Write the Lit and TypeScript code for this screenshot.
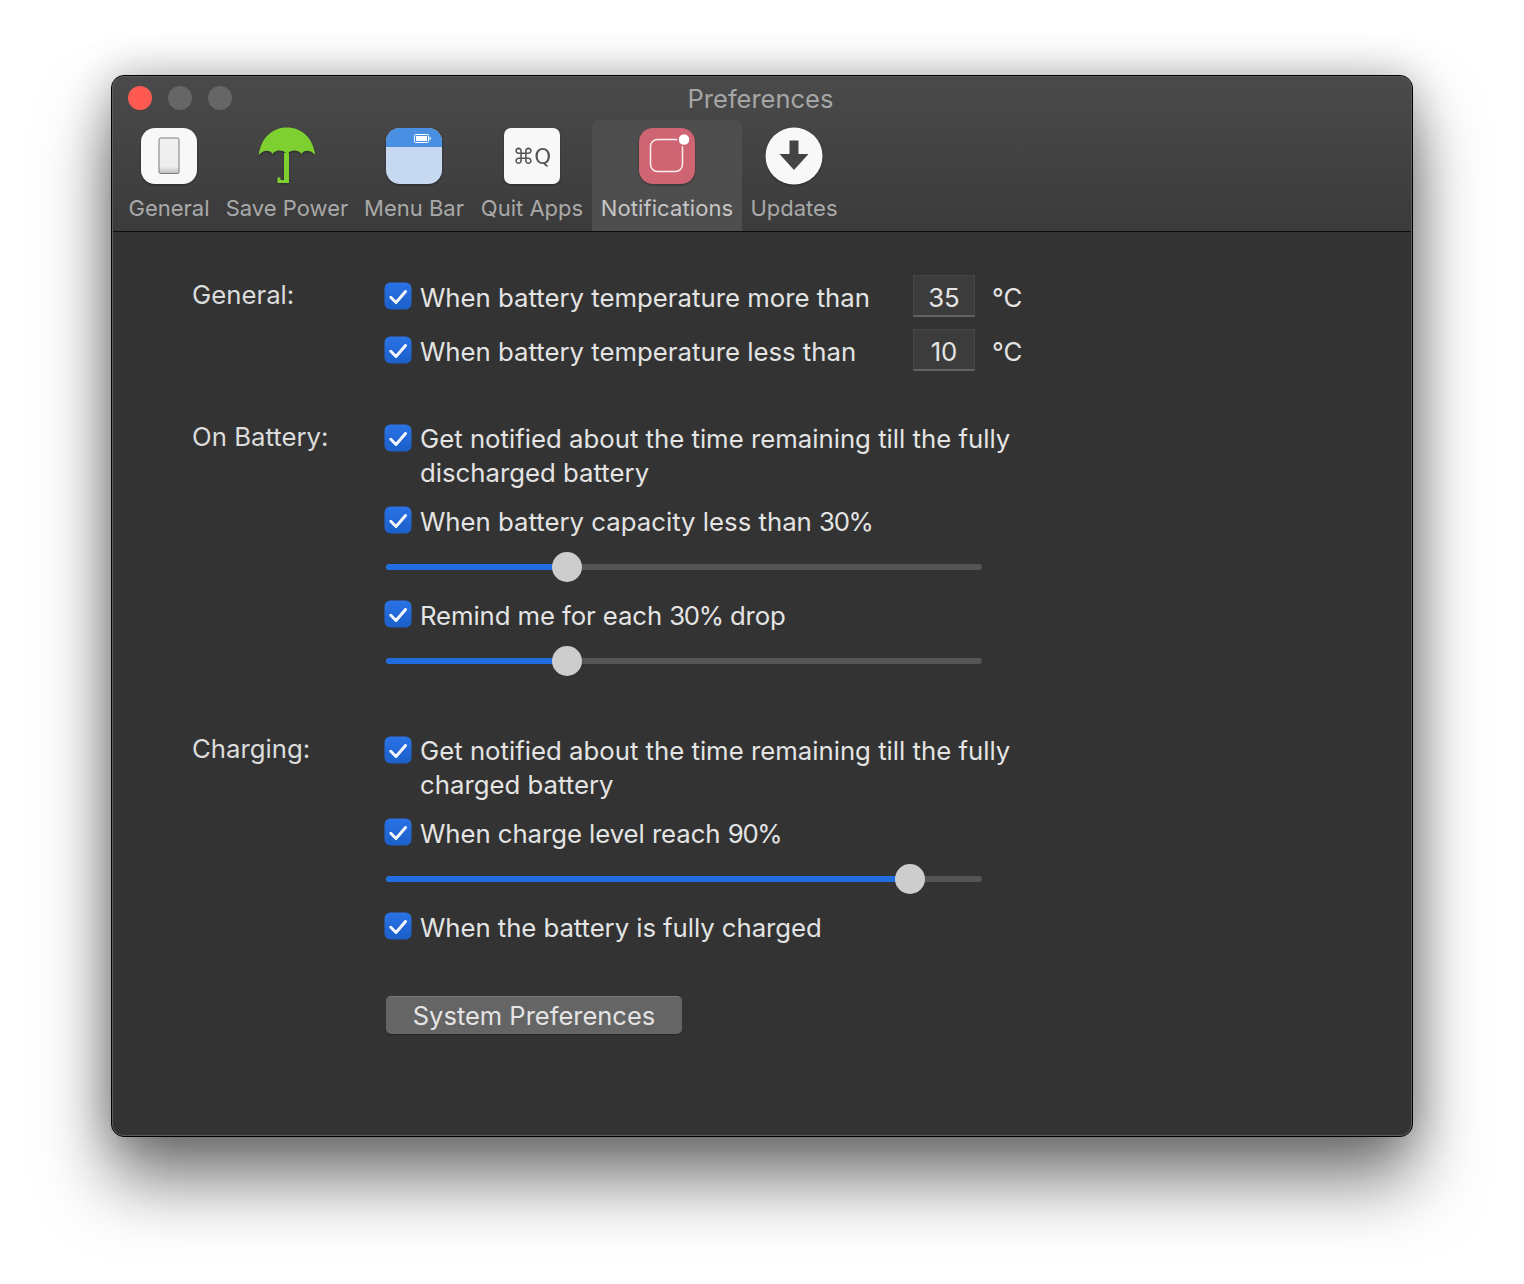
import { LitElement, html, css, svg } from "lit";
import { customElement } from "lit/decorators.js";

const icons: Record<string, unknown> = {
  general: html`<svg viewBox="0 0 58 58" width="58" height="58"><defs><linearGradient id="sw" x1="0" y1="0" x2="0" y2="1"><stop offset="0" stop-color="#f0f0f0"/><stop offset=".8" stop-color="#eeeeee"/><stop offset="1" stop-color="#bdbdbd"/></linearGradient></defs>
    <rect x="1" y="1" width="56" height="56" rx="14" fill="#f8f8f8"/><rect x="19" y="11" width="20" height="35.500" rx="1.500" fill="url(#sw)" stroke="#7d7d7d"/></svg>`,
  power: html`<svg viewBox="0 0 58 58" width="58" height="58"><path d="M.7 28C3 11 14 .5 29 .5S55 11 57.300 28C53 23 46 22 43.500 27C41 22.500 33 22 29 27C25 22 17 22.500 14.500 27C12 22 5 23 .7 28Z" fill="#7ed030"/><path d="M26 26H31V56H19.500V50.500H22.500V53H26Z" fill="#7ed030"/></svg>`,
  menu: html`<svg viewBox="0 0 58 58" width="58" height="58"><defs><clipPath id="mc"><rect x="1" y="1" width="56" height="56" rx="14"/></clipPath></defs><g clip-path="url(#mc)"><rect x="1" y="1" width="56" height="56" fill="#c7d9f1"/><rect x="1" y="1" width="56" height="19" fill="#4a90e2"/></g>
    <rect x="29.500" y="7.500" width="14" height="8" rx="1" fill="none" stroke="#fff" stroke-width="1"/><rect x="31" y="9" width="11" height="5" fill="#fff"/><rect x="44.500" y="10" width="1.200" height="3" fill="#fff"/></svg>`,
  quit: html`<svg viewBox="0 0 58 58" width="58" height="58"><rect x="1" y="1" width="56" height="56" rx="7" fill="#f8f8f8"/></svg><span class="qt">⌘Q</span>`,
  notif: html`<svg viewBox="0 0 58 58" width="58" height="58"><rect x="1" y="1" width="56" height="56" rx="14" fill="#cf6473"/><rect x="12.500" y="12.500" width="32" height="32" rx="7" fill="none" stroke="#fbeef0" stroke-width="1.500"/><circle cx="46" cy="12.500" r="7" fill="#cf6473"/><circle cx="46" cy="12.500" r="5.300" fill="#fff"/></svg>`,
  updates: html`<svg viewBox="0 0 58 58" width="58" height="58"><circle cx="29" cy="29" r="28.500" fill="#f8f8f8"/><path d="M24.500 13.500H33.500V27H43.500L29 43L14.500 27H24.500Z" fill="#444"/></svg>`,
};

const tabs = [
  ["General", "general"],
  ["Save Power", "power"],
  ["Menu Bar", "menu"],
  ["Quit Apps", "quit"],
  ["Notifications", "notif"],
  ["Updates", "updates"],
];

const check = svg`<svg viewBox="0 0 28 28" width="28" height="28"><defs><linearGradient id="cb" x1="0" y1="0" x2="0" y2="1"><stop offset="0" stop-color="#2a72e6"/><stop offset="1" stop-color="#1b5fc8"/></linearGradient></defs><rect x="0.500" y="0.500" width="27" height="27" rx="6" fill="url(#cb)"/><path d="M6.800 15.300L12 20.500L21.500 9.500" fill="none" stroke="#f2f6fd" stroke-width="3" stroke-linecap="round" stroke-linejoin="round"/></svg>`;

@customElement("app-root")
export class AppRoot extends LitElement {
  static styles = css`
    :host {
      display: block;
      box-sizing: border-box;
      width: 1524px;
      height: 1284px;
      padding: 75px 111px 0;
      background: #fff;
      font-family: Inter, "Noto Sans", sans-serif;
      color: #e4e4e4;
    }
    .win {
      box-sizing: border-box;
      width: 1302px;
      height: 1062px;
      border: 1px solid #000;
      border-radius: 13px;
      background: #333;
      box-shadow: 0 44px 70px rgba(0, 0, 0, 0.52), 0 0 44px rgba(0, 0, 0, 0.28);
      overflow: hidden;
      position: relative;
    }
    .win::after {
      content: "";
      position: absolute;
      inset: 0;
      border-radius: 12px;
      box-shadow: inset 0 0 0 1px #5c5c5c;
      pointer-events: none;
    }
    .bar {
      height: 156px;
      box-sizing: border-box;
      background: linear-gradient(#4a4a4a, #3b3b3b);
      border-bottom: 1px solid #0c0c0c;
      position: relative;
      padding: 44px 0 0 8px;
    }
    .lights {
      position: absolute;
      left: 16px;
      top: 10px;
      display: flex;
      gap: 16px;
    }
    .lights i { width: 24px; height: 24px; border-radius: 50%; background: #666; }
    .lights i:first-child { background: #ff5a52; }
    .title {
      position: absolute;
      left: 0;
      right: 0;
      top: 7px;
      text-align: center;
      padding-right: 3px;
      font-size: 25.5px;
      line-height: 32px;
      color: #a6a6a6;
    }
    .tabs {
      display: grid;
      grid-template-columns: 98px 138px 116px 120px 150px 104px;
      height: 111px;
    }
    .tab {
      padding-top: 7px;
      display: flex;
      flex-direction: column;
      align-items: center;
      border-radius: 8px 8px 0 0;
      font-size: 22px;
      color: #a9a9a9;
      white-space: nowrap;
    }
    .tab.on { background: #4e4e4e; color: #c6c6c6; letter-spacing: 0.1px; }
    .ico { position: relative; width: 58px; height: 58px; margin-bottom: 7px; filter: drop-shadow(0 1px 1px rgba(0,0,0,.35)); }
    .ico svg { display: block; }
    .qt {
      position: absolute;
      inset: 0;
      display: flex;
      align-items: center;
      justify-content: center;
      font-size: 21.500px;
      color: #555;
      font-family: "DejaVu Sans", sans-serif;
    }
    .lab { line-height: 32px; }
    .body { padding: 43px 0 0 80px; }
    .sec { display: grid; grid-template-columns: 193px 700px; }
    .sec + .sec { margin-top: 50px; }
    .sec.c { margin-top: 57px; }
    .name { font-size: 25.750px; line-height: 34px; margin-top: -1px; color: #dcdcdc; }
    .gen .name { margin-top: 3px; }
    .col { display: flex; flex-direction: column; }
    .row {
      display: flex;
      align-items: flex-start;
      font-size: 25.750px;
      line-height: 34px;
      margin-top: 15px;
    }
    .row:first-child { margin-top: 0; }
    .t { padding-top: 1px; margin-bottom: -1px; }
    .row.wrap .t { width: 640px; }
    .row.wrap svg { margin-top: 3px; }
    .row.tight .t { letter-spacing: -0.1px; }
    .row.tight2 .t { letter-spacing: -0.06px; }
    .num { letter-spacing: -1.300px; }
    .row svg { flex: none; margin: 2px 8px 0 -1px; display: block; }
    .gen .row { height: 42px; align-items: center; margin-top: 12px; }
    .gen .row:first-child { margin-top: 0; }
    .gen .row svg { margin-top: 0; }
    .gen .t, .gen .unit { padding-top: 4px; margin-bottom: 0; }
    .gen .t { width: 493px; }
    .input {
      box-sizing: border-box;
      width: 62px;
      height: 42px;
      background: #3c3c3c;
      border: 1px solid #454545;
      border-bottom: 2px solid #626262;
      text-align: center;
      line-height: 44px;
      margin-right: 17px;
    }
    .slider { position: relative; height: 30px; width: 596px; margin: 14px 0 0 1px; }
    .slider + .row { margin-top: 16px; }
    .track { position: absolute; left: 0; right: 0; top: 12px; height: 6px; border-radius: 3px; background: #555; }
    .fill { position: absolute; left: 0; top: 12px; height: 6px; border-radius: 3px; background: #1f6ee0; }
    .thumb { position: absolute; top: 0; width: 30px; height: 30px; margin-left: -15px; border-radius: 50%; background: #cdcdcd; }
    .btn {
      box-sizing: border-box;
      width: 296px;
      height: 38px;
      margin: 52px 0 0 1px;
      background: #656565;
      border-radius: 5px;
      border-top: 1px solid #7a7a7a;
      text-align: center;
      font-size: 25.500px;
      line-height: 37px;
      box-shadow: 0 1px 1px rgba(0,0,0,.3);
    }
  `;

  private row(text: unknown, cls = "") {
    return html`<div class="row ${cls}">${check}<span class="t">${text}</span></div>`;
  }
  private slider(x: number) {
    return html`<div class="slider"><div class="track"></div><div class="fill" style="width:${x}px"></div><div class="thumb" style="left:${x}px"></div></div>`;
  }
  private temp(text: string, v: string) {
    return html`<div class="row">${check}<span class="t">${text}</span><div class="input">${v}</div><span class="unit">°C</span></div>`;
  }

  render() {
    return html`<div class="win">
      <div class="bar">
        <div class="lights"><i></i><i></i><i></i></div>
        <div class="title">Preferences</div>
        <div class="tabs">
          ${tabs.map(
            ([l, k]) => html`<div class="tab ${k === "notif" ? "on" : ""}"><div class="ico">${icons[k]}</div><div class="lab">${l}</div></div>`
          )}
        </div>
      </div>
      <div class="body">
        <div class="sec gen">
          <div class="name">General:</div>
          <div class="col">
            ${this.temp("When battery temperature more than", "35")}
            ${this.temp("When battery temperature less than", "10")}
          </div>
        </div>
        <div class="sec">
          <div class="name">On Battery:</div>
          <div class="col">
            ${this.row("Get notified about the time remaining till the fully discharged battery", "wrap")}
            ${this.row(html`When battery capacity less than <span class="num">30%</span>`)}
            ${this.slider(181)}
            ${this.row(html`Remind me for each <span class="num">30%</span> drop`, "tight")}
            ${this.slider(181)}
          </div>
        </div>
        <div class="sec c">
          <div class="name">Charging:</div>
          <div class="col">
            ${this.row("Get notified about the time remaining till the fully charged battery", "wrap")}
            ${this.row(html`When charge level reach <span class="num">90%</span>`, "tight2")}
            ${this.slider(524)}
            ${this.row("When the battery is fully charged", "tight2")}
            <div class="btn">System Preferences</div>
          </div>
        </div>
      </div>
    </div>`;
  }
}
